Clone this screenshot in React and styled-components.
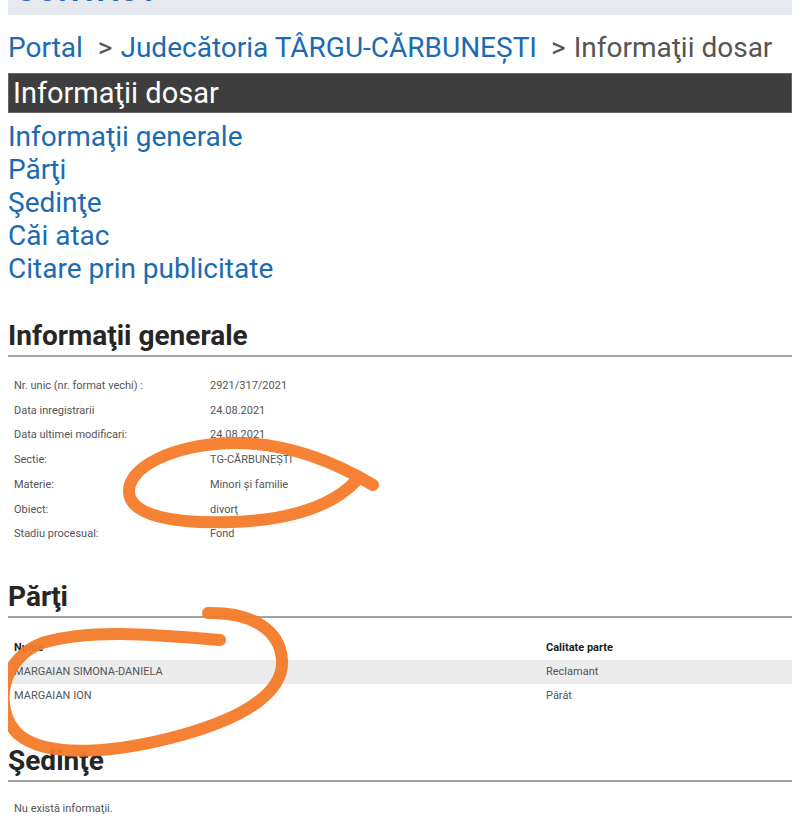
import React from "react";
import styled, { createGlobalStyle } from "styled-components";

const GlobalStyle = createGlobalStyle`
  html, body {
    margin: 0;
    padding: 0;
    background: #fff;
  }
  body {
    font-family: Roboto, "Liberation Sans", Arial, sans-serif;
    color: #333;
  }
`

const Page = styled.div`
  position: relative;
  width: 784px;
  margin: 0 8px;
  overflow: hidden;
  height: 839px;
`

// only the bottom edge of the top menu is still in view
const TopBar = styled.div`
  height: 40px;
  margin-top: -25px;
  background: #e6e9ed;
  display: flex;
  align-items: flex-end;
  padding: 0 0 9px 8px;
  box-sizing: border-box;
  font-size: 30px;
  font-weight: 700;
  color: #1a6bb3;
  letter-spacing: 1px;
  line-height: 1;
`

const Breadcrumb = styled.div`
  display: flex;
  align-items: baseline;
  font-size: 28px;
  line-height: 33px;
  margin-top: 16px;
  white-space: nowrap;
`

const Crumb = styled.a`
  color: #1a6bb3;
  text-decoration: none;
`

const Sep = styled.span`
  color: #555;
  margin: 0 8px 0 ${p => p.$wide ? 15 : 14}px;
`

const Current = styled.span`
  color: #555;
`

const DarkBar = styled.div`
  margin-top: 9px;
  height: 40px;
  background: #3e3e3e;
  border: 1px solid #666;
  box-sizing: border-box;
  color: #fff;
  font-size: 29px;
  line-height: 38px;
  padding-left: 4px;
`

const NavList = styled.div`
  display: flex;
  flex-direction: column;
  margin-top: 7px;
`

const NavLink = styled.a`
  color: #1a6bb3;
  font-size: 28px;
  line-height: 33px;
  text-decoration: none;
`

const SectionTitle = styled.h2`
  margin: ${p => p.$top}px 0 0;
  font-size: 28px;
  font-weight: 700;
  color: #262626;
  line-height: 34px;
  padding-bottom: 2px;
  border-bottom: 2px solid #a3a3a3;
`

const InfoTable = styled.div`
  display: grid;
  grid-template-columns: 202px 1fr;
  margin-top: 17px;
  font-size: 11px;
  color: #555;
`

const Cell = styled.div`
  line-height: 24.7px;
  padding-left: ${p => p.$first ? 6 : 0}px;
`

const PartyTable = styled.div`
  margin-top: 18px;
  font-size: 11px;
`

const PartyRow = styled.div`
  display: grid;
  grid-template-columns: 532px 1fr;
  height: 24px;
  align-items: center;
  background: ${p => p.$shade ? "#ececec" : "transparent"};
  color: ${p => p.$head ? "#222" : "#555"};
  font-weight: ${p => p.$head ? 700 : 400};
  padding-left: 6px;
`

const Empty = styled.div`
  margin-top: 20px;
  padding-left: 6px;
  font-size: 11px;
  color: #555;
`

const Scribble = styled.svg`
  position: absolute;
  left: -8px;
  top: 0;
  width: 800px;
  height: 839px;
  pointer-events: none;
`

const info = [
  ["Nr. unic (nr. format vechi) :", "2921/317/2021"],
  ["Data inregistrarii", "24.08.2021"],
  ["Data ultimei modificari:", "24.08.2021"],
  ["Sectie:", "TG-CĂRBUNEȘTI"],
  ["Materie:", "Minori și familie"],
  ["Obiect:", "divorţ"],
  ["Stadiu procesual:", "Fond"],
]

const parties = [
  ["MARGAIAN SIMONA-DANIELA", "Reclamant"],
  ["MARGAIAN ION", "Pârât"],
]

export default function App() {
  return (
    <>
      <GlobalStyle />
      <Page>
        <TopBar>CONTACT</TopBar>
        <Breadcrumb>
          <Crumb href="#">Portal</Crumb>
          <Sep $wide>&gt;</Sep>
          <Crumb href="#">Judecătoria TÂRGU-CĂRBUNEȘTI</Crumb>
          <Sep>&gt;</Sep>
          <Current>Informaţii dosar</Current>
        </Breadcrumb>
        <DarkBar>Informaţii dosar</DarkBar>
        <NavList>
          <NavLink href="#">Informaţii generale</NavLink>
          <NavLink href="#">Părţi</NavLink>
          <NavLink href="#">Şedinţe</NavLink>
          <NavLink href="#">Căi atac</NavLink>
          <NavLink href="#">Citare prin publicitate</NavLink>
        </NavList>

        <SectionTitle $top={34}>Informaţii generale</SectionTitle>
        <InfoTable>
          {info.map(([k, v]) => (
            <React.Fragment key={k}>
              <Cell $first>{k}</Cell>
              <Cell>{v}</Cell>
            </React.Fragment>
          ))}
        </InfoTable>

        <SectionTitle $top={33}>Părţi</SectionTitle>
        <PartyTable>
          <PartyRow $head>
            <span>Nume</span>
            <span>Calitate parte</span>
          </PartyRow>
          {parties.map(([n, q], i) => (
            <PartyRow key={n} $shade={i === 0}>
              <span>{n}</span>
              <span>{q}</span>
            </PartyRow>
          ))}
        </PartyTable>

        <SectionTitle $top={36}>Şedinţe</SectionTitle>
        <Empty>Nu există informaţii.</Empty>

        <Scribble viewBox="0 0 800 839">
          <g fill="none" stroke="#f47b2a" strokeWidth="12" strokeLinecap="round" strokeLinejoin="round" opacity="0.95">
            <path d="M 373 485 C 335 462, 285 442, 232 443 C 170 445, 128 468, 129 492 C 130 516, 175 524, 232 522 C 292 520, 332 506, 356 481" />
            <path d="M 220 640 C 160 635, 90 628, 42 643 C 2 658, -8 708, 18 734 C 48 760, 120 752, 182 735 C 250 716, 284 690, 282 660 C 280 630, 252 612, 208 613" />
          </g>
        </Scribble>
      </Page>
    </>
  );
}
